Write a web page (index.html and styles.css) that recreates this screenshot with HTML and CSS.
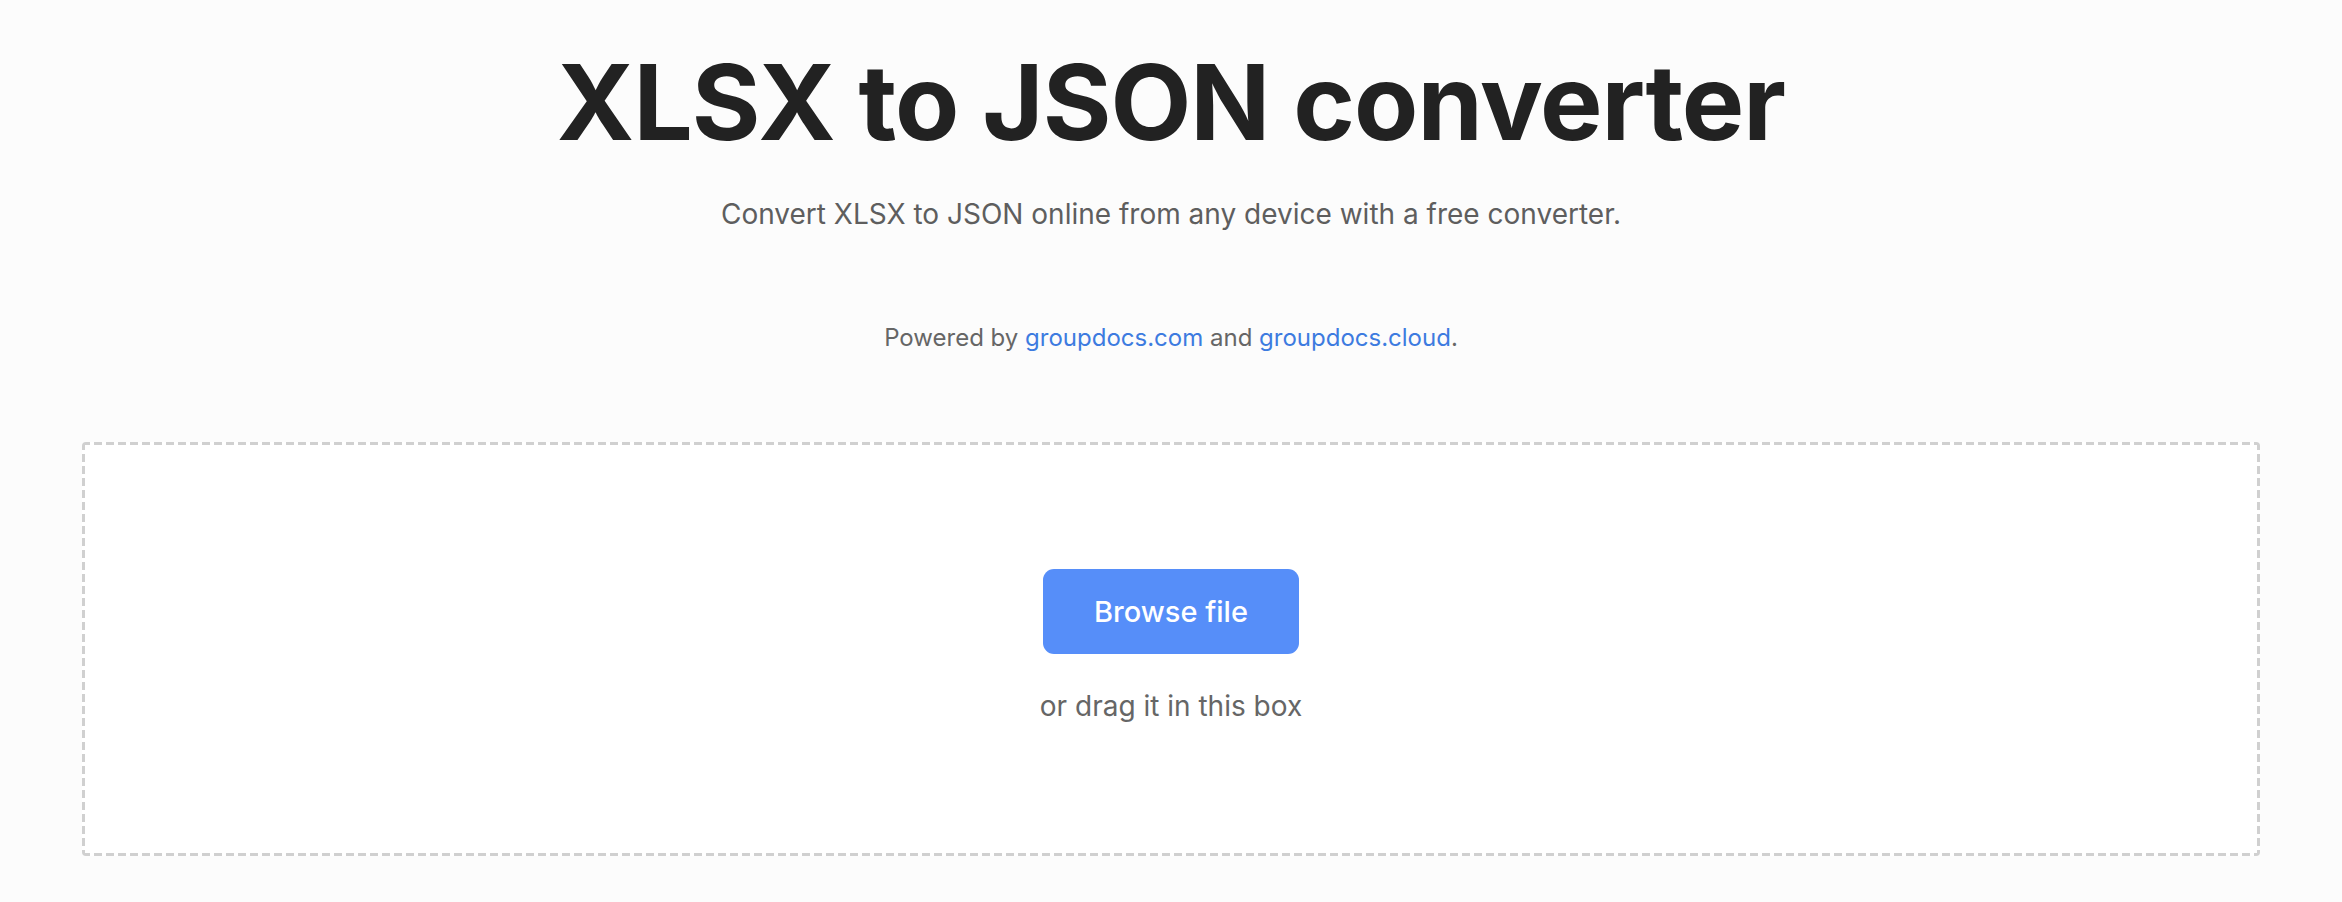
FILE: index.html
```html
<!DOCTYPE html>
<html lang="en">
<head>
<meta charset="utf-8">
<title>XLSX to JSON converter</title>
<link rel="stylesheet" href="styles.css">
</head>
<body>
<main class="page">
  <header class="hero">
    <h1 class="title">XLSX to JSON converter</h1>
    <p class="subtitle">Convert XLSX to JSON online from any device with a free converter.</p>
    <p class="powered">Powered by <a href="#" class="link">groupdocs.com</a> and <a href="#" class="link">groupdocs.cloud</a>.</p>
  </header>
  <section class="dropzone">
    <button class="browse" type="button">Browse file</button>
    <p class="drag">or drag it in this box</p>
  </section>
</main>
</body>
</html>
```
FILE: styles.css
```css
html, body {
  margin: 0;
  padding: 0;
  background: #fcfcfc;
}
body {
  font-family: Inter, "Noto Sans", "Liberation Sans", sans-serif;
  color: #222;
}
.page {
  display: flex;
  flex-direction: column;
  align-items: stretch;
  padding: 0 82px;
}
.hero {
  display: flex;
  flex-direction: column;
  align-items: center;
  text-align: center;
}
.title {
  margin: 40px 0 0;
  font-size: 105px;
  line-height: 124px;
  font-weight: 700;
  letter-spacing: -1px;
  color: #222222;
}
.subtitle {
  margin: 32px 0 0;
  font-size: 28px;
  line-height: 36px;
  color: #5e5e5e;
}
.powered {
  margin: 90px 0 0;
  font-size: 24px;
  line-height: 32px;
  color: #666666;
}
.link {
  color: #3d7be0;
  text-decoration: none;
}
.dropzone {
  margin-top: 88px;
  height: 414px;
  box-sizing: border-box;
  padding-bottom: 6px;
  border-radius: 4px;
  background:
    repeating-linear-gradient(90deg, #d0d0d0 0 8px, transparent 8px 12px) left top / 100% 3px no-repeat,
    repeating-linear-gradient(90deg, #d0d0d0 0 8px, transparent 8px 12px) left bottom / 100% 3px no-repeat,
    repeating-linear-gradient(180deg, #d0d0d0 0 8px, transparent 8px 12px) left top / 3px 100% no-repeat,
    repeating-linear-gradient(180deg, #d0d0d0 0 8px, transparent 8px 12px) right top / 3px 100% no-repeat,
    #ffffff;
  display: flex;
  flex-direction: column;
  align-items: center;
  justify-content: center;
}
.browse {
  width: 256px;
  height: 85px;
  border: none;
  border-radius: 11px;
  background: #568ef9;
  color: #ffffff;
  font-family: Inter, "Noto Sans", "Liberation Sans", sans-serif;
  font-size: 29px;
  font-weight: 500;
  margin-top: 0;
}
.drag {
  margin: 34px 0 0;
  font-size: 28px;
  line-height: 36px;
  color: #666666;
}
```
